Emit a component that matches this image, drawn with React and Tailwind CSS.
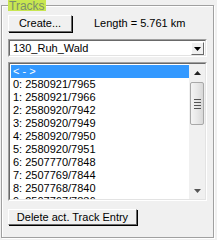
const ROWS = [
  '0: 2580921/7965',
  '1: 2580921/7966',
  '2: 2580920/7942',
  '3: 2580920/7949',
  '4: 2580920/7950',
  '5: 2580920/7951',
  '6: 2507770/7848',
  '7: 2507769/7844',
  '8: 2507768/7840',
  '9: 2507767/7836',
];

const raised =
  'border border-t-white border-l-white border-r-[#696969] border-b-[#696969] shadow-[1px_1px_0_#000]';

export default function App() {
  return (
    <div className="relative w-[217px] h-[240px] bg-[#f0f0f0] overflow-hidden text-[11px] text-black font-['Liberation_Sans',Arial,sans-serif] leading-none">
      {/* group box */}
      <div className="absolute left-[1px] top-[5px] w-[213px] h-[233px] border border-[#a0a0a0] shadow-[inset_1px_1px_0_#fff,1px_1px_0_#fff]">
        <div className="flex flex-col pl-[6px] pt-[9px]">
          <div className="flex items-center">
            <button className={`w-[64px] h-[17px] bg-[#f0f0f0] flex items-center justify-center ${raised}`}>
              Create...
            </button>
            <span className="ml-[22px]">Length = 5.761 km</span>
          </div>

          {/* combo */}
          <div className="mt-[7px] w-[199px] h-[18px] bg-white border border-t-[#a0a0a0] border-l-[#a0a0a0] border-r-white border-b-white">
            <div className="h-full flex border border-t-[#696969] border-l-[#696969] border-r-[#e3e3e3] border-b-[#e3e3e3]">
              <span className="flex-1 pl-[3px] pt-[2px] text-[11px]">130_Ruh_Wald</span>
              <div className="w-[13px] h-[13px] mt-[1px] mr-[1px] bg-[#f0f0f0] flex items-center justify-center border border-t-white border-l-white border-r-[#696969] border-b-[#696969]">
                <svg width="7" height="4" viewBox="0 0 7 4"><path d="M0 0h7L3.5 4z" fill="#000" /></svg>
              </div>
            </div>
          </div>

          {/* list */}
          <div className="mt-[5px] w-[199px] h-[139px] bg-white border border-t-[#a0a0a0] border-l-[#a0a0a0] border-r-white border-b-white">
            <div className="h-full flex border border-t-[#696969] border-l-[#696969] border-r-[#e3e3e3] border-b-[#e3e3e3]">
              <div className="flex-1 overflow-hidden pt-[1px] pl-[1px]">
                <div className="h-[13px] bg-[#3399ff] text-white pl-[2px] flex items-center">&lt; - &gt;</div>
                {ROWS.map((r) => (
                  <div key={r} className="h-[13px] pl-[2px] flex items-center">{r}</div>
                ))}
              </div>
              <div className="w-[16px] h-full bg-[#f0f0f0] flex flex-col items-center">
                <div className="w-[15px] h-[17px] flex items-center justify-center">
                  <svg width="7" height="4" viewBox="0 0 7 4"><path d="M3.5 0L7 4H0z" fill="#222" /></svg>
                </div>
                <div className="mt-[1px] w-[14px] h-[43px] rounded-[2px] border border-[#a8a8a8] bg-gradient-to-r from-[#f4f4f4] via-[#e8e8e8] to-[#d8d8d8] flex flex-col items-center justify-center gap-[2px]">
                  <div className="w-[7px] h-[1px] bg-[#555]" />
                  <div className="w-[7px] h-[1px] bg-[#555]" />
                  <div className="w-[7px] h-[1px] bg-[#555]" />
                  <div className="w-[7px] h-[1px] bg-[#555]" />
                </div>
                <div className="flex-1" />
                <div className="w-[15px] h-[17px] flex items-center justify-center">
                  <svg width="7" height="4" viewBox="0 0 7 4"><path d="M0 0h7L3.5 4z" fill="#555" /></svg>
                </div>
              </div>
            </div>
          </div>

          <button className={`mt-[8px] w-[129px] h-[16px] bg-[#f0f0f0] flex items-center justify-center ${raised}`}>
            Delete act. Track Entry
          </button>
        </div>
      </div>

      {/* group label */}
      <div className="absolute left-[8px] top-0 h-[11px] px-[1px] bg-[#c8e650] text-[#7a8f6a] text-[12px] leading-[12px]">
        Tracks
      </div>
    </div>
  );
}
